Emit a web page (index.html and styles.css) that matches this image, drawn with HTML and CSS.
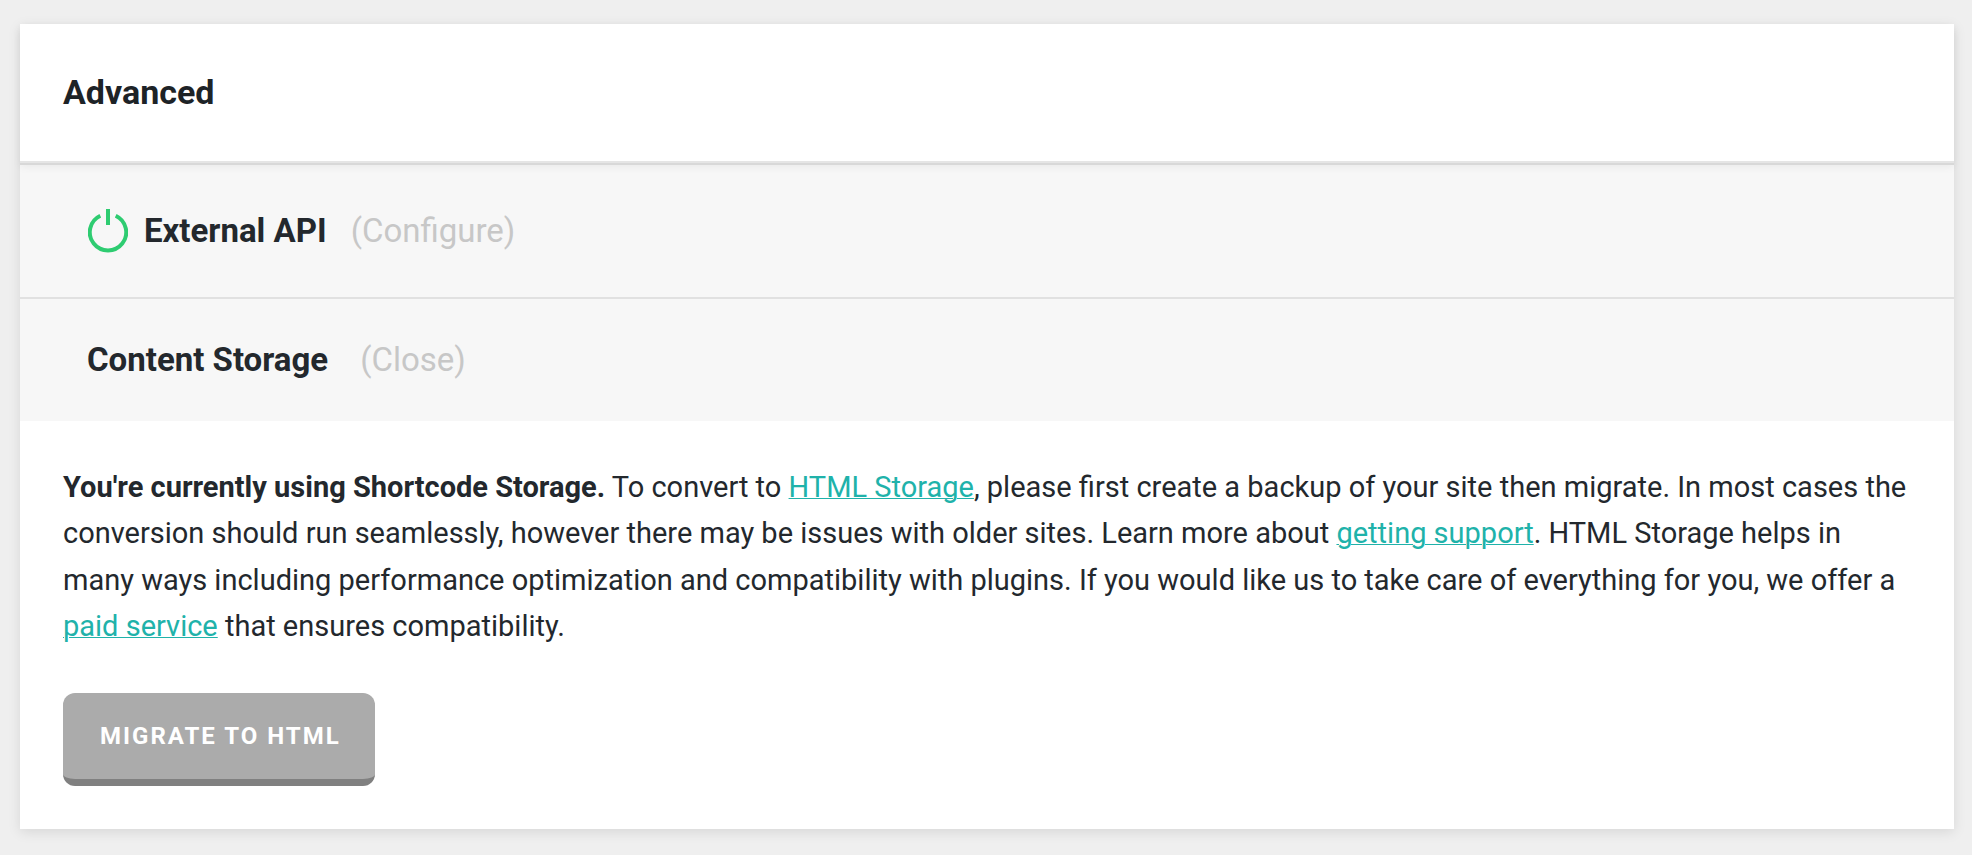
FILE: index.html
```html
<!DOCTYPE html>
<html lang="en">
<head>
<meta charset="utf-8">
<title>Advanced</title>
<link rel="stylesheet" href="styles.css">
</head>
<body>
<main class="card">
  <header class="card-header">
    <h2 class="card-title">Advanced</h2>
  </header>
  <section class="row row-api">
    <svg class="power" viewBox="0 0 40 44" aria-hidden="true">
      <path d="M12.3 6.8A18.2 18.2 0 1 0 27.7 6.8M20 0V16"/>
    </svg>
    <h3 class="row-title">External API</h3>
    <button class="toggle" type="button">(Configure)</button>
  </section>
  <section class="row row-storage">
    <h3 class="row-title">Content Storage</h3>
    <button class="toggle" type="button">(Close)</button>
  </section>
  <section class="content">
    <p class="text"><strong>You're currently using Shortcode Storage.</strong> To convert to <a href="#">HTML Storage</a>, please first create a backup of your site then migrate. In most cases the conversion should run seamlessly, however there may be issues with older sites. Learn more about <a href="#">getting support</a>. HTML Storage helps in many ways including performance optimization and compatibility with plugins. If you would like us to take care of everything for you, we offer a <a href="#">paid service</a> that ensures compatibility.</p>
    <button class="migrate" type="button">Migrate to HTML</button>
  </section>
</main>
</body>
</html>
```

FILE: styles.css
```css
* {
  box-sizing: border-box;
}

body {
  margin: 0;
  padding: 24px 18px 24px 20px;
  background: #efefef;
  color: #23282d;
  font-family: Roboto, "Noto Sans", sans-serif;
}

.card {
  background: #fff;
  box-shadow: 0 3px 12px rgba(0, 0, 0, 0.1);
}

.card-header {
  position: relative;
  padding: 48px 43px 49px;
  border-bottom: 2px solid #e5e5e5;
  box-shadow: 0 2px 0 #d8d8d8, 0 4px 8px rgba(0, 0, 0, 0.06);
}

.card-title,
.row-title {
  margin: 0;
  line-height: 40px;
  font-weight: 700;
}

.card-title {
  color: #1d2327;
  font-size: 34px;
}

.row-title {
  font-size: 33px;
}

.row {
  display: flex;
  align-items: center;
  background: #f7f7f7;
}

.row-api {
  padding: 46px 68px 44px;
  border-bottom: 2px solid #e1e1e1;
}

.row-storage {
  padding: 41px 67px;
}

.power {
  width: 40px;
  height: 44px;
  margin-right: 16px;
  fill: none;
  stroke: #2ecc71;
  stroke-width: 4;
}

.toggle {
  margin: 0 0 0 24px;
  padding: 0;
  border: 0;
  background: none;
  color: #c7c7c7;
  font: 400 33px/40px Roboto, "Noto Sans", sans-serif;
  cursor: pointer;
}

.row-storage .toggle {
  margin-left: 32px;
}

.content {
  padding: 43px;
}

.text {
  margin: 0 0 43px;
  font-size: 29px;
  line-height: 1.6;
}

.text a {
  color: #20b2aa;
  text-decoration: underline;
  text-decoration-thickness: 1px;
}

.migrate {
  display: block;
  padding: 29px 34px 29px 37px;
  border: 0;
  border-bottom: 7px solid #808080;
  border-radius: 12px;
  background: #ababab;
  color: #fff;
  font: 700 24px/28px Roboto, "Noto Sans", sans-serif;
  letter-spacing: 2px;
  text-transform: uppercase;
  cursor: pointer;
}
```
